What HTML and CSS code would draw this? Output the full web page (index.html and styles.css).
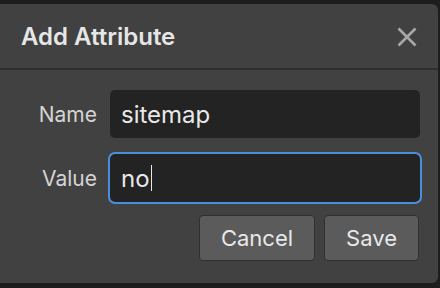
FILE: index.html
```html
<!DOCTYPE html>
<html lang="en">
<head>
  <meta charset="UTF-8" />
  <meta name="viewport" content="width=device-width, initial-scale=1.0" />
  <title>Add Attribute</title>
  <link rel="stylesheet" href="styles.css">
</head>
<body>
  <div class="dialog">
    <div class="dialog-header">
      <h2 class="dialog-title">Add Attribute</h2>
      <button class="close-btn" aria-label="Close">
        <svg width="20" height="20" viewBox="0 0 20 20">
          <path d="M1.5 1.5 L18.5 18.5 M18.5 1.5 L1.5 18.5" stroke="#a8a8a8" stroke-width="2.6" fill="none" />
        </svg>
      </button>
    </div>
    <div class="dialog-body">
      <div class="form-grid">
        <label class="field-label" for="attrName">Name</label>
        <div class="field-input">sitemap</div>
        <label class="field-label" for="attrValue">Value</label>
        <div class="field-input focused">no<span class="caret"></span></div>
      </div>
      <div class="actions">
        <button class="button">Cancel</button>
        <button class="button">Save</button>
      </div>
    </div>
  </div>
</body>
</html>
```

FILE: styles.css
```css
body {
  margin: 0;
  background: #1d1d1d;
  font-family: Inter, "Liberation Sans", sans-serif;
  height: 288px;
  overflow: hidden;
}
.dialog {
  margin: 4px 2px 0 0;
  height: 279px;
  background: #414141;
  border-radius: 0 6px 6px 0;
  display: flex;
  flex-direction: column;
}
.dialog-header {
  height: 64px;
  border-bottom: 2px solid #2e2e2e;
  display: flex;
  align-items: center;
  justify-content: space-between;
  padding: 0 21px 0 21px;
}
.dialog-title {
  margin: 0;
  font-size: 24px;
  font-weight: 600;
  color: #e6e6e6;
}
.close-btn {
  background: none;
  border: none;
  padding: 0;
  width: 20px;
  height: 20px;
  margin-top: 1px;
  cursor: pointer;
}
.close-btn svg {
  display: block;
}
.dialog-body {
  padding: 20px 18px 0 0;
}
.form-grid {
  display: grid;
  grid-template-columns: 97px 1fr;
  column-gap: 13px;
  row-gap: 16px;
  align-items: center;
}
.field-label {
  text-align: right;
  font-size: 21px;
  color: #d4d4d4;
}
.field-input {
  height: 48px;
  box-sizing: border-box;
  background: #232323;
  border-radius: 5px;
  padding: 0 11px;
  display: flex;
  align-items: center;
  font-size: 24px;
  color: #e8e8e8;
}
.field-input.focused {
  outline: 2px solid #4a8fdf;
}
.caret {
  display: inline-block;
  width: 1.5px;
  height: 26px;
  background: #e8e8e8;
  margin-left: 1px;
}
.actions {
  display: flex;
  justify-content: flex-end;
  gap: 9px;
  margin-top: 13px;
  padding-right: 1px;
}
.button {
  height: 46px;
  padding: 0 21px;
  background: #5b5b5b;
  border: 1px solid #303030;
  border-radius: 4px;
  color: #e8e8e8;
  font-family: Inter, "Liberation Sans", sans-serif;
  font-size: 22px;
  cursor: pointer;
}
```
